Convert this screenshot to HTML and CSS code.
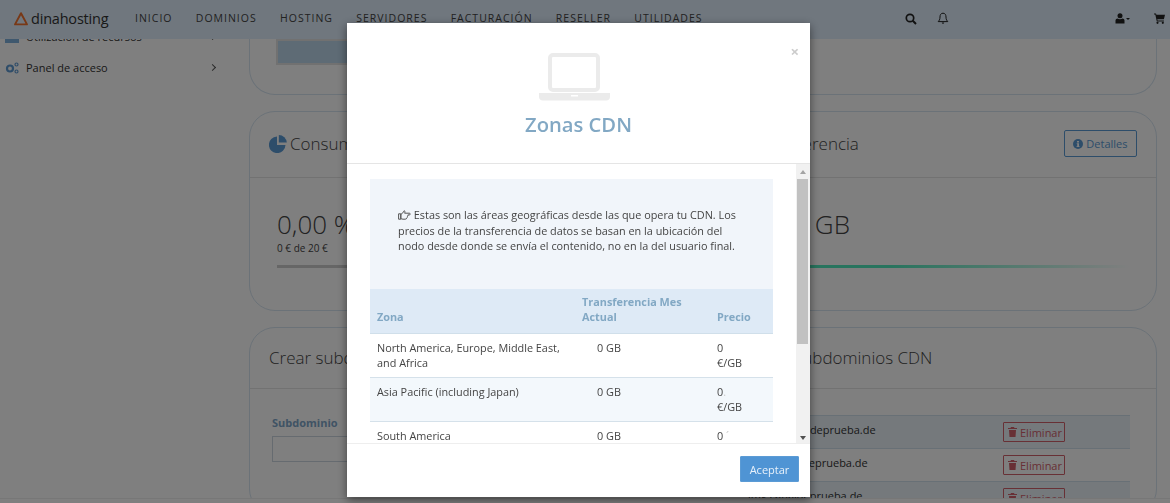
FILE: index.html
```html
<!DOCTYPE html>
<html lang="es">
  <head>
    <meta charset="UTF-8" />
    <meta name="viewport" content="width=device-width, initial-scale=1.0" />
    <title>Zonas CDN</title>
    <link rel="stylesheet" href="styles.css">
  </head>
  <body>
    <header class="topbar">
      <div class="logo">
        <svg class="logo-mark" width="16" height="16" viewBox="0 0 16 16"><path d="M8 2.2 14 13.4H2Z" fill="none" stroke="#f0712c" stroke-width="1.9" stroke-linejoin="round"/></svg>
        <span>dinahosting</span>
      </div>
      <nav class="nav">
        <a>Inicio</a>
        <a>Dominios</a>
        <a>Hosting</a>
        <a>Servidores</a>
        <a>Facturación</a>
        <a>Reseller</a>
        <a>Utilidades</a>
      </nav>
      <div class="tools">
        <svg width="12" height="12" viewBox="0 0 12 12"><circle cx="5" cy="5" r="3.7" fill="none" stroke="#222" stroke-width="1.7"/><path d="M7.8 7.8 11 11" stroke="#222" stroke-width="2"/></svg>
        <svg class="tool-bell" width="12" height="13" viewBox="0 0 12 13"><path d="M6 1.2C3.8 1.2 3 3 3 5c0 2.6-.9 3.6-1.8 4.6h9.6C9.9 8.6 9 7.600 9 5c0-2-.8-3.800-3-3.800Z" fill="none" stroke="#222" stroke-width="1"/><path d="M4.800 10.500a1.200 1.200 0 0 0 2.400 0Z" fill="#222"/></svg>
        <span class="tool-user">
          <svg width="10" height="11" viewBox="0 0 10 11"><circle cx="5" cy="2.800" r="2.500" fill="#222"/><path d="M.5 10.500V7.500C.5 6.300 1.500 5.700 2.500 5.500c1.500 1 3.500 1 5 0 1 .2 2 .8 2 2v3Z" fill="#222"/></svg>
          <svg width="4" height="2" viewBox="0 0 4 2"><path d="M0 0h4L2 2Z" fill="#222"/></svg>
        </span>
        <svg width="11" height="11" viewBox="0 0 11 11"><path d="M0 .6h2l.4 1.200H11L9.900 6.200H3.300L3.600 7.400h6.300v1H2.800L1.300 1.600H0Z" fill="#222"/><circle cx="3.500" cy="9.800" r="1.100" fill="#222"/><circle cx="8.800" cy="9.800" r="1.100" fill="#222"/></svg>
      </div>
    </header>

    <div class="page">
      <aside class="sidebar">
        <a class="side-item">
          <svg width="14" height="12" viewBox="0 0 14 12"><path d="M0 3h14v9H0Z" fill="#7fb0dc"/></svg>
          <span>Utilización de recursos</span>
          <i class="chev"></i>
        </a>
        <a class="side-item">
          <svg width="14" height="12" viewBox="0 0 14 12"><circle cx="5" cy="6.500" r="3" fill="none" stroke="#5f9ad2" stroke-width="2.200"/><circle cx="11.500" cy="2.500" r="1.500" fill="none" stroke="#5f9ad2" stroke-width="1.200"/><circle cx="11.500" cy="9.500" r="1.500" fill="none" stroke="#5f9ad2" stroke-width="1.200"/></svg>
          <span>Panel de acceso</span>
          <i class="chev"></i>
        </a>
      </aside>

      <main class="main">
        <section class="card card-usage">
          <div class="usage-chart"></div>
        </section>

        <section class="card">
          <div class="split split-stats">
            <div class="card-head card-head-tall">
              <svg width="18" height="18" viewBox="0 0 18 18"><path d="M8 1.500V10h8.500A8.300 8.300 0 1 1 8 1.500Z" fill="#5b9bd5"/><path d="M9.800 0a8 8 0 0 1 8 7.600h-8Z" fill="#5b9bd5"/></svg>
              <h2>Consumo de CDN</h2>
            </div>
            <div class="card-head card-head-tall card-head-right">
              <h2>Transferencia</h2>
              <a class="btn-outline"><svg width="10" height="10" viewBox="0 0 10 10"><circle cx="5" cy="5" r="5" fill="#5b9bd5"/><path d="M4 2h2v1.500H4ZM3.700 4.300H6V7.200h.6V8H3.500v-.8h.7V5.100h-.5Z" fill="#fff"/></svg> Detalles</a>
            </div>
          </div>
          <div class="split split-stats stat-row">
            <div class="stat">
              <p class="stat-value">0,00 %</p>
              <p class="stat-note">0 € de 20 €</p>
              <div class="stat-bar"></div>
            </div>
            <div class="stat stat-right">
              <p class="stat-value">0,00 GB</p>
              <p class="stat-note">&nbsp;</p>
              <div class="stat-bar stat-bar-green"></div>
            </div>
          </div>
        </section>

        <section class="card">
          <div class="split split-subs">
            <div class="card-head">
              <h2>Crear subdominio</h2>
            </div>
            <div class="card-head">
              <h2>Subdominios CDN</h2>
            </div>
          </div>
          <div class="split split-subs">
            <form class="sub-form">
              <label class="sub-label">Subdominio</label>
              <input class="sub-input" type="text" />
            </form>
            <div class="sub-list">
              <div class="sub-row sub-row-alt">
                <span class="sub-name">media.canaldeprueba.de</span>
                <a class="btn-delete"><svg width="9" height="10" viewBox="0 0 9 10"><path d="M3 0h3l.5 1H9v1H0V1h2.500ZM1 3h7l-.5 7h-6Z" fill="#d0606a"/></svg> Eliminar</a>
              </div>
              <div class="sub-row">
                <span class="sub-name">imgs.canaldeprueba.de</span>
                <a class="btn-delete"><svg width="9" height="10" viewBox="0 0 9 10"><path d="M3 0h3l.5 1H9v1H0V1h2.500ZM1 3h7l-.5 7h-6Z" fill="#d0606a"/></svg> Eliminar</a>
              </div>
              <div class="sub-row sub-row-alt">
                <span class="sub-name">img.canaldeprueba.de</span>
                <a class="btn-delete"><svg width="9" height="10" viewBox="0 0 9 10"><path d="M3 0h3l.5 1H9v1H0V1h2.500ZM1 3h7l-.5 7h-6Z" fill="#d0606a"/></svg> Eliminar</a>
              </div>
            </div>
          </div>
        </section>
      </main>
    </div>

    <div class="page-foot"></div>

    <div class="overlay">
      <div class="modal">
        <div class="modal-head">
          <span class="modal-close">×</span>
          <svg class="modal-icon" width="72" height="48" viewBox="0 0 72 48">
            <rect x="11" y="2" width="48" height="35" rx="3" fill="none" stroke="#ebebeb" stroke-width="4"/>
            <path d="M0 40h71v3.500a4 4 0 0 1-4 4H4a4 4 0 0 1-4-4Z" fill="#ebebeb"/>
            <rect x="32" y="42" width="7" height="1.500" fill="#fff"/>
          </svg>
          <h1 class="modal-title">Zonas CDN</h1>
        </div>

        <div class="modal-body">
          <div class="modal-scroll">
            <div class="note">
              <p>
                <svg class="note-hand" width="13" height="10" viewBox="0 0 13 10"><path d="M.6 3.800h2.200v5.400H.6ZM2.800 4.200C4.400 3.600 5.400 2.400 6 .8c.8 0 1.200.7.9 1.600l-.3.800h4.700c1.300 0 1.300 1.700 0 1.700H9.900c.3.800 0 1.500-.5 1.700.1.800-.2 1.300-.8 1.500 0 .7-.5 1.100-1.300 1.100H5c-1 0-1.500-.4-2.200-.7Z" fill="none" stroke="#555" stroke-width="1"/></svg>
                Estas son las áreas geográficas desde las que opera tu CDN. Los precios de la transferencia de datos se basan en la ubicación del nodo desde donde se envía el contenido, no en la del usuario final.
              </p>
            </div>
            <table class="zones">
              <thead>
                <tr>
                  <th class="col-zone">Zona</th>
                  <th class="col-transfer">Transferencia Mes Actual</th>
                  <th class="col-price">Precio</th>
                </tr>
              </thead>
              <tbody>
                <tr>
                  <td>North America, Europe, Middle East, and Africa</td>
                  <td class="cell-gb">0 GB</td>
                  <td class="cell-price">0 €/GB</td>
                </tr>
                <tr>
                  <td>Asia Pacific (including Japan)</td>
                  <td class="cell-gb">0 GB</td>
                  <td class="cell-price">0<span class="faint">.</span> €/GB</td>
                </tr>
                <tr>
                  <td>South America</td>
                  <td class="cell-gb">0 GB</td>
                  <td class="cell-price">0<span class="faint"> ´</span></td>
                </tr>
              </tbody>
            </table>
          </div>
          <div class="scrollbar">
            <span class="arrow-up"></span>
            <div class="scroll-track"><div class="scroll-thumb"></div></div>
            <span class="arrow-down"></span>
          </div>
        </div>

        <div class="modal-foot">
          <a class="btn-primary">Aceptar</a>
        </div>
      </div>
    </div>
  </body>
</html>
```

FILE: styles.css
```css
* {
  box-sizing: border-box;
}

html,
body {
  margin: 0;
  height: 503px;
  overflow: hidden;
}

body {
  background-color: #fff;
  color: #333;
  font-family: "Open Sans", sans-serif;
  font-size: 11px;
}

p,
h1,
h2 {
  margin: 0;
}

/* top bar */
.topbar {
  position: absolute;
  top: 0;
  left: 0;
  right: 0;
  z-index: 2;
  display: flex;
  align-items: center;
  height: 39px;
  padding: 0 0 2px 13px;
  background-color: #e0eefc;
}

.logo {
  display: flex;
  align-items: center;
  gap: 2px;
  width: 122px;
  font-family: "Open Sans", sans-serif;
  font-size: 14.500px;
  letter-spacing: -0.2px;
  color: #333;
}

.nav {
  display: flex;
  gap: 23.300px;
  padding-bottom: 1px;
}

.nav a {
  color: #444;
  font-size: 10.500px;
  letter-spacing: 1px;
  text-transform: uppercase;
}

.tools {
  display: flex;
  align-items: center;
  margin-left: auto;
  padding-right: 5px;
}

.tool-bell {
  margin-left: 20px;
}

.tool-user {
  display: flex;
  align-items: center;
  gap: 1px;
  margin-left: 166px;
  margin-right: 24px;
}

/* page */
.page {
  display: flex;
  height: 503px;
}

.sidebar {
  width: 249px;
  padding: 21px 0 0 5px;
}

.side-item {
  display: flex;
  align-items: center;
  height: 31px;
  color: #333;
}

.side-item svg {
  width: 14px;
  margin-right: 7px;
}

.side-item span {
  flex: 1;
}

.chev {
  width: 5px;
  height: 5px;
  margin-right: 34px;
  border-top: 1px solid #555;
  border-right: 1px solid #555;
  transform: rotate(45deg);
}

.main {
  flex: 1;
  padding-right: 13px;
}

.card {
  margin-bottom: 16px;
  border: 1px solid #d6e4f0;
  border-radius: 26px;
}

.card-usage {
  height: 95px;
  padding: 39px 0 0 26px;
  border-top: 0;
  border-radius: 0 0 26px 26px;
}

.usage-chart {
  width: 500px;
  height: 26px;
  background-color: #bcd6ea;
  border: 2px solid #e2e2e2;
}

.split {
  display: grid;
}

.split-stats {
  grid-template-columns: 1fr 401px;
}

.split-subs {
  grid-template-columns: 1fr 382px;
}

.card-head {
  display: flex;
  align-items: center;
  gap: 3px;
  height: 61px;
  padding-left: 19px;
  padding-bottom: 2px;
  border-bottom: 1px solid #e5e5e5;
}

.card-head-tall {
  height: 66px;
}

.card-head h2 {
  color: #444;
  font-size: 17px;
  font-weight: 300;
}

.card-head-right {
  justify-content: space-between;
  padding-right: 19px;
  padding-left: 0;
}

.btn-outline {
  display: flex;
  align-items: center;
  gap: 3px;
  padding: 0 8.500px;
  height: 27px;
  color: #5b9bd5;
  border: 1px solid #5b9bd5;
  border-radius: 2px;
}

.stat-row {
  height: 132px;
}

.stat {
  padding: 31px 20px 0 27px;
}

.stat-right {
  padding-left: 3px;
  padding-right: 26px;
}

.stat-value {
  color: #444;
  font-size: 26px;
  font-weight: 300;
  line-height: 30px;
}

.stat-note {
  margin-top: 2px;
  color: #444;
  font-size: 10px;
  line-height: 14px;
}

.stat-bar {
  height: 3px;
  margin-top: 10px;
  background-color: #ccc;
}

.stat-bar-green {
  background: linear-gradient(to right, #50e8bc 0%, #50e8bc 35%, #fff 100%);
}

.sub-form {
  padding: 26px 0 0 22px;
}

.sub-label {
  display: block;
  margin-bottom: 6px;
  color: #7fa6c9;
  font-size: 11px;
  font-weight: 700;
}

.sub-input {
  display: block;
  width: 400px;
  height: 26px;
  border: 1px solid #ccd6e0;
  border-radius: 0;
}

.sub-list {
  margin: 26px 26px 0 -1px;
}

.sub-row {
  display: flex;
  justify-content: space-between;
  align-items: center;
  height: 33px;
  padding-right: 65px;
  padding-left: 0;
  border-top: 1px solid #d0e0ec;
}

.sub-row-alt {
  background-color: #eaf2f9;
}

.sub-name {
  margin-top: -5px;
  margin-left: -25px;
}

.btn-delete {
  display: flex;
  align-items: center;
  gap: 3px;
  width: 62px;
  height: 20px;
  padding-left: 4px;
  color: #d0606a;
  border: 1px solid #d0606a;
  border-radius: 1px;
  font-size: 11px;
}

.page-foot {
  position: absolute;
  left: 0;
  right: 0;
  bottom: 0;
  height: 5px;
  background-color: #fff;
  border-top: 1px solid #eee;
}

/* modal */
.overlay {
  position: fixed;
  top: 0;
  left: 0;
  right: 0;
  bottom: 0;
  z-index: 5;
  padding: 23px 0 0 347px;
  background-color: rgba(0, 0, 0, 0.5);
}

.modal {
  display: flex;
  flex-direction: column;
  width: 463px;
  height: 474px;
  background-color: #fff;
  box-shadow: 0 3px 9px rgba(0, 0, 0, 0.5);
}

.modal-head {
  position: relative;
  height: 141px;
  padding-top: 30px;
  text-align: center;
  border-bottom: 1px solid #e5e5e5;
}

.modal-close {
  position: absolute;
  top: 18px;
  right: 11px;
  color: #ccc;
  font-size: 15px;
  font-weight: 700;
  line-height: 20px;
}

.modal-icon {
  display: block;
  margin: 0 auto 0 192px;
}

.modal-title {
  margin-top: 8px;
  color: #82a8c4;
  font-size: 20.200px;
  font-weight: 600;
  line-height: 30px;
}

.modal-body {
  display: flex;
  height: 279px;
  font-size: 10.850px;
}

.modal-scroll {
  flex: 1;
  overflow: hidden;
  padding: 15px 23px 0;
}

.note {
  height: 110px;
  padding: 28px 26px 0 28px;
  background-color: #f1f5fa;
  color: #444;
  line-height: 15.500px;
}

.note-hand {
  vertical-align: -1px;
}

.zones {
  width: 403px;
  border-collapse: collapse;
  table-layout: fixed;
}

.zones th {
  height: 44px;
  padding: 0 7px 8px;
  background-color: #deeaf6;
  color: #82a8c4;
  font-weight: 700;
  line-height: 15.500px;
  text-align: left;
  vertical-align: bottom;
  border-bottom: 1px solid #d0dfea;
}

.col-zone {
  width: 205px;
}

.col-transfer {
  width: 135px;
}

.zones td {
  height: 43px;
  padding: 6px 7px 6px;
  color: #444;
  line-height: 15.500px;
  vertical-align: top;
  border-bottom: 1px solid #d5e1ea;
}

.zones tbody tr:nth-child(2) td {
  background-color: #f3f8fc;
}

.zones .cell-gb {
  padding-left: 22px;
}

.zones .cell-price {
  padding-right: 24px;
}

.faint {
  color: #ccc;
}

.scrollbar {
  display: flex;
  flex-direction: column;
  align-items: center;
  width: 14px;
  padding-right: 1px;
  background-color: #f1f1f1;
}

.arrow-up,
.arrow-down {
  width: 0;
  height: 0;
  border-left: 3.500px solid transparent;
  border-right: 3.500px solid transparent;
}

.arrow-up {
  margin-top: 6px;
  margin-bottom: 5px;
  border-bottom: 4px solid #a3a3a3;
}

.arrow-down {
  margin: 5px 0 3px;
  border-top: 4px solid #505050;
}

.scroll-track {
  flex: 1;
  width: 100%;
  padding: 0 1px;
}

.scroll-thumb {
  height: 165px;
  background-color: #c1c1c1;
}

.modal-foot {
  display: flex;
  justify-content: flex-end;
  height: 54px;
  padding: 12px 11px 0 0;
  border-top: 1px solid #eee;
}

.btn-primary {
  display: flex;
  align-items: center;
  justify-content: center;
  width: 59px;
  height: 26px;
  background-color: #4f94d4;
  color: #e8f1fa;
  border: 1px solid #5b9bd5;
  border-radius: 1px;
}
```
